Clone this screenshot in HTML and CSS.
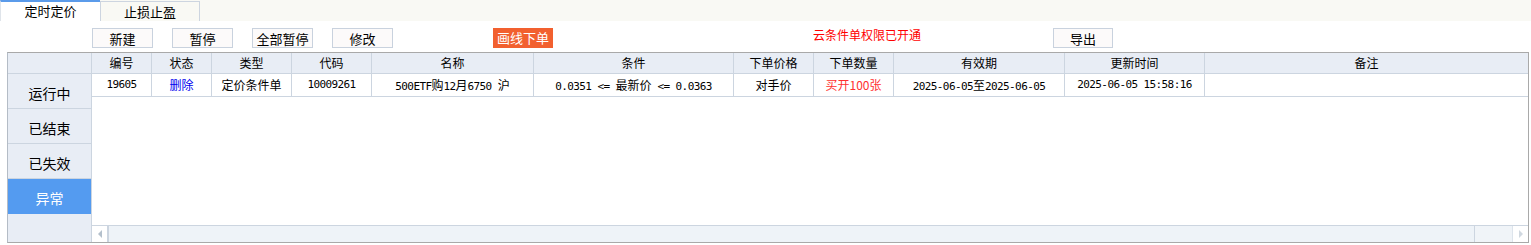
FILE: index.html
```html
<!DOCTYPE html>
<html lang="zh-CN">
<head>
<meta charset="utf-8">
<title>条件单</title>
<link rel="stylesheet" href="styles.css">
</head>
<body>
<div class="tabbar">
  <div class="tab tab-active">定时定价</div>
  <div class="tab">止损止盈</div>
</div>
<div class="toolbar">
  <button class="btn b-new">新建</button>
  <button class="btn b-gap">暂停</button>
  <button class="btn b-gap">全部暂停</button>
  <button class="btn b-gap">修改</button>
  <button class="btn-red">画线下单</button>
  <span class="notice">云条件单权限已开通</span>
  <button class="btn b-export">导出</button>
</div>
<div class="main">
  <div class="side">
    <div class="side-head"></div>
    <div class="side-item">运行中</div>
    <div class="side-item">已结束</div>
    <div class="side-item">已失效</div>
    <div class="side-item active">异常</div>
  </div>
  <div class="grid">
    <div class="row head">
      <div class="c w60">编号</div>
      <div class="c w60">状态</div>
      <div class="c w80">类型</div>
      <div class="c w80">代码</div>
      <div class="c w162">名称</div>
      <div class="c w200">条件</div>
      <div class="c w80">下单价格</div>
      <div class="c w80">下单数量</div>
      <div class="c w171">有效期</div>
      <div class="c w140">更新时间</div>
      <div class="c last">备注</div>
    </div>
    <div class="row data">
      <div class="c w60 mono">19605</div>
      <div class="c w60 link">删除</div>
      <div class="c w80">定价条件单</div>
      <div class="c w80 mono">10009261</div>
      <div class="c w162 mono">500ETF<span class="cjk">购</span>12<span class="cjk">月</span>6750 <span class="cjk">沪</span></div>
      <div class="c w200 mono">0.0351 &lt;= <span class="cjk">最新价</span> &lt;= 0.0363</div>
      <div class="c w80">对手价</div>
      <div class="c w80 red">买开100张</div>
      <div class="c w171 mono">2025-06-05<span class="cjk">至</span>2025-06-05</div>
      <div class="c w140 mono">2025-06-05 15:58:16</div>
      <div class="c last"></div>
    </div>
    <div class="body"></div>
    <div class="hscroll">
      <div class="hs-btn"><span class="tri-l"></span></div>
      <div class="hs-thumb"></div>
      <div class="hs-track"></div>
      <div class="hs-btn right"><span class="tri-r"></span></div>
    </div>
  </div>
</div>
</body>
</html>
```
FILE: styles.css
```css
* { box-sizing: border-box; }
html, body { margin: 0; padding: 0; background: #ffffff; }
body {
  width: 1531px;
  height: 245px;
  overflow: hidden;
  font-family: "Noto Sans CJK SC", "Liberation Sans", sans-serif;
  font-size: 12px;
  color: #000;
}

.tabbar {
  display: flex;
  height: 21px;
  background: #f9f9f4;
}
.tab {
  width: 100px;
  height: 20px;
  margin-top: 1px;
  border: 1px solid #cdd5e0;
  border-bottom: none;
  text-align: center;
  font-size: 13px;
  line-height: 19px;
  background: #f9f9f4;
}
.tab-active {
  margin-top: 0;
  height: 21px;
  border: none;
  border-left: 1px solid #dfe4ea;
  border-top: 2px solid #5b9bea;
  background: #ffffff;
  line-height: 18px;
}

.toolbar {
  display: flex;
  align-items: flex-start;
  padding-top: 7px;
  height: 31px;
}
.btn {
  width: 61px;
  height: 20px;
  padding: 0;
  border: 1px solid #c9d2de;
  background: #fcfafa;
  font-family: inherit;
  font-size: 13px;
  line-height: 17px;
  color: #000;
}
.b-new { margin-left: 92px; }
.b-gap { margin-left: 19px; }
.btn-red {
  margin-left: 100px;
  width: 60px;
  height: 20px;
  padding: 0;
  border: none;
  background: #f2602f;
  color: #ffffff;
  font-family: inherit;
  font-size: 13px;
  line-height: 20px;
}
.notice {
  margin-left: 260px;
  width: 240px;
  color: #ff0000;
  font-size: 12px;
  line-height: 14px;
}
.b-export { width: 60px; }

.main {
  display: flex;
  margin-left: 7px;
  width: 1522px;
  height: 191px;
  border: 1px solid #b4bcc6;
  border-top-color: #a9a9a9;
  border-right-color: #a9a9a9;
  border-bottom-color: #a9a9a9;
}
.side {
  width: 84px;
  background: #e8edf5;
  border-right: 1px solid #ccd5e0;
  display: flex;
  flex-direction: column;
}
.side-head {
  height: 21px;
  border-bottom: 1px solid #ccd5e0;
}
.side-item {
  height: 35px;
  border-bottom: 1px solid #ccd5e0;
  text-align: center;
  font-size: 14px;
  line-height: 38px;
}
.side-item.active {
  background: #549bf0;
  color: #ffffff;
  border-bottom-color: #549bf0;
}

.grid {
  flex: 1;
  display: flex;
  flex-direction: column;
  min-width: 0;
}
.row { display: flex; flex-shrink: 0; }
.row.head {
  height: 21px;
  background: #e8edf5;
  border-bottom: 1px solid #ccd5e0;
}
.row.data {
  height: 23px;
  border-bottom: 1px solid #ccd5e0;
}
.c {
  border-right: 1px solid #ccd5e0;
  text-align: center;
  white-space: nowrap;
  overflow: hidden;
  font-size: 12px;
  line-height: 20px;
}
.row.data .c { line-height: 21px; }
.c.last { flex: 1; border-right: none; }
.w60 { width: 60px; }
.w80 { width: 80px; }
.w140 { width: 140px; }
.w162 { width: 162px; }
.w171 { width: 171px; }
.w200 { width: 200px; }

.mono {
  font-family: "DejaVu Sans Mono", "Noto Sans CJK SC", monospace;
  font-size: 11px;
  letter-spacing: -0.6px;
}
.mono .cjk {
  font-family: "Noto Sans CJK SC", sans-serif;
  font-size: 12px;
  letter-spacing: 0;
}
.link { color: #0000ee; }
.red { color: #ff3030; }

.body { flex: 1; }

.hscroll {
  height: 17px;
  flex-shrink: 0;
  display: flex;
  background: #eef3f8;
  border-top: 1px solid #ccd5e0;
}
.hs-btn {
  width: 17px;
  background: #ffffff;
  border-right: 2px solid #ccd5e0;
  display: flex;
  align-items: center;
  justify-content: center;
}
.hs-btn.right {
  width: 16px;
  border-right: none;
  border-left: 1px solid #dde4ec;
}
.hs-thumb {
  width: 1366px;
  background: #eef3f8;
  border-right: 1px solid #ccd5e0;
}
.hs-track { flex: 1; background: #f0f4f8; }
.tri-l {
  width: 0; height: 0;
  border-top: 4px solid transparent;
  border-bottom: 4px solid transparent;
  border-right: 4px solid #b4c0cc;
}
.tri-r {
  width: 0; height: 0;
  border-top: 4px solid transparent;
  border-bottom: 4px solid transparent;
  border-left: 4px solid #d0d8e0;
}
```
